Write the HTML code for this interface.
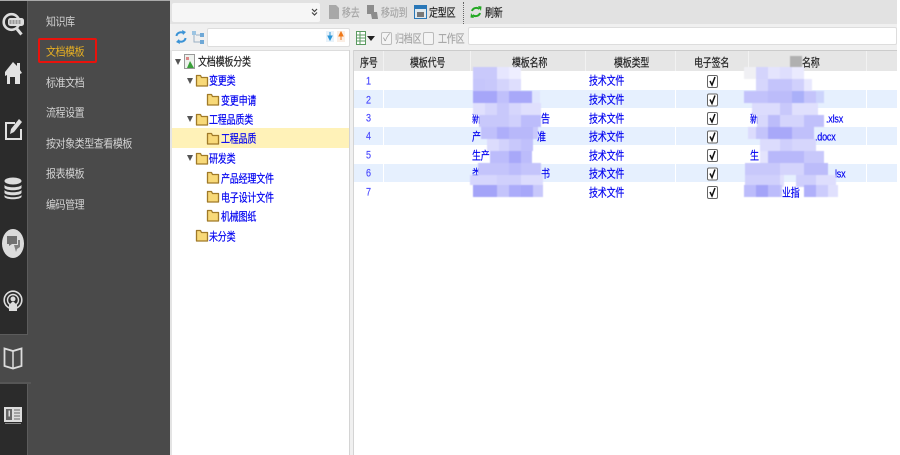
<!DOCTYPE html>
<html><head><meta charset="utf-8"><style>
html,body{margin:0;padding:0;background:#fff}
#p{position:relative;width:900px;height:455px;overflow:hidden;background:#fff;font-family:"Liberation Sans","WenQuanYi Zen Hei","Noto Sans CJK SC",sans-serif;font-size:9px;line-height:12px;filter:blur(.35px)}
.a{position:absolute}
.t{position:absolute;white-space:nowrap;letter-spacing:-.2px;transform-origin:left center;transform:translateY(.5px) scaleY(1.250);-webkit-text-stroke:.15px currentColor}
.m{color:#d4d4d4;font-size:10px;letter-spacing:-.45px;transform:translateY(1.500px) scaleY(1.120);-webkit-text-stroke:0}
.n{color:#0000f0}
.h{color:#222;top:56px;text-align:center}
.g{color:#a6a6a6}
svg{position:absolute;overflow:visible}
</style></head><body><div id="p">
<div class="a" style="left:0;top:0;width:170px;height:455px;background:#4a4a4a"></div>
<div class="a" style="left:0;top:0;width:170px;height:1px;background:#aaa"></div>
<div class="a" style="left:0;top:1px;width:27px;height:334px;background:#2b2b2b"></div>
<div class="a" style="left:0;top:384px;width:27px;height:71px;background:#2b2b2b"></div>
<div class="a" style="left:27px;top:1px;width:1px;height:334px;background:#5c5c5c"></div>
<div class="a" style="left:27px;top:384px;width:1px;height:71px;background:#5c5c5c"></div>
<div class="a" style="left:0;top:334px;width:28px;height:1px;background:#5c5c5c"></div>
<div class="a" style="left:0;top:382px;width:31px;height:2px;background:#565656"></div>

<svg style="left:0;top:0" width="28" height="455" viewBox="0 0 28 455">
<circle cx="11.500" cy="22" r="7.800" fill="none" stroke="#ddd" stroke-width="2.600"/><rect x="8" y="18" width="16" height="8" rx="2.500" fill="#ddd"/><path d="M9.500 21h12M9.500 23h12" stroke="#555" stroke-width="1" stroke-dasharray="2 1"/><path d="M17 29l4.500 5.500" stroke="#ddd" stroke-width="3"/>
<path d="M5 72L13 62l4 4v-3h3v7l2 3-2 1v10h-5v-7h-5v7H7V75l-2 1z" fill="#e2e2e2"/>
<path d="M15 123H6v16h15v-10" fill="none" stroke="#e0e0e0" stroke-width="2"/><path d="M10 134l1-5 8-10 3 3-8 10z" fill="#e0e0e0"/>
<ellipse cx="13" cy="181" rx="8.500" ry="3.500" fill="#ddd"/><path d="M4.500 185c2 3 15 3 17 0v3c-2 3-15 3-17 0zM4.500 190c2 3 15 3 17 0v3c-2 3-15 3-17 0zM4.500 195c2 3 15 3 17 0v2c-2 3-15 3-17 0z" fill="#ddd"/>
<ellipse cx="13" cy="243.500" rx="11" ry="14.500" fill="#dcdcdc"/><path d="M7 236h10v8h-5l-3 2v-2H7z" fill="#707070"/><path d="M14 245h4v-5h2v7l-3 2-1 3z" fill="#808080"/>
<circle cx="13" cy="300" r="8.800" fill="none" stroke="#ddd" stroke-width="1.600"/><circle cx="13" cy="300" r="5.500" fill="none" stroke="#ddd" stroke-width="1.400"/><circle cx="13" cy="299" r="2.500" fill="#ddd"/><path d="M9 311v-6l3-3h2l3 3v6z" fill="#ddd"/>
<path d="M4.500 348.500l8.500 2.500 8.500-2.500v17.500l-8.500 2.500-8.500-2.500z" fill="none" stroke="#ddd" stroke-width="1.800"/><path d="M13 351v18" stroke="#ddd" stroke-width="1.500"/>
<rect x="4" y="407" width="18" height="15" fill="#ddd"/><rect x="6" y="409" width="6" height="11" fill="#666"/><rect x="8.500" y="410.500" width="1.500" height="6" fill="#ddd"/><path d="M14 410h6M14 413h6M14 416h6M14 419h6" stroke="#666"/><path d="M5 423.500h16" stroke="#888"/>
</svg>

<div class="a" style="left:38px;top:38px;height:25px;border:2px solid #e8120c;border-radius:2px;box-sizing:border-box;width:59px"></div>
<div class="t m" style="left:46px;top:16px">知识库</div>
<div class="t m" style="left:46px;top:46px;color:#e8b022">文档模板</div>
<div class="t m" style="left:46px;top:77px">标准文档</div>
<div class="t m" style="left:46px;top:107px">流程设置</div>
<div class="t m" style="left:46px;top:138px">按对象类型查看模板</div>
<div class="t m" style="left:46px;top:168px">报表模板</div>
<div class="t m" style="left:46px;top:199px">编码管理</div>

<div class="a" style="left:170px;top:0;width:730px;height:51px;background:#f0f0f0"></div>
<div class="a" style="left:170px;top:0;width:727px;height:24px;background:#e2e2e2"></div>
<div class="a" style="left:172px;top:3px;width:148px;height:19px;background:#f6f6f6;border-radius:2px"></div>
<svg style="left:311px;top:8px" width="7" height="8"><path d="M1 1l2.500 2.500L6 1M1 4.500L3.500 7 6 4.500" fill="none" stroke="#444" stroke-width="1.200"/></svg>
<svg style="left:329px;top:5px" width="10" height="15"><path d="M0 0h7l3 3v11H0z" fill="#a8a8a8"/></svg>
<div class="t g" style="left:342px;top:6px">移去</div>
<svg style="left:366px;top:5px" width="14" height="15"><path d="M1 0h7v7h3l1 7H6l-1-5H1z" fill="#8c8c8c"/></svg>
<div class="t g" style="left:381px;top:6px">移动到</div>
<svg style="left:414px;top:5px" width="13" height="14"><rect x=".5" y=".5" width="12" height="13" fill="#dfe8ee" stroke="#2a78b8"/><rect x="1" y="1" width="11" height="3" fill="#2a78b8"/><rect x="3" y="7" width="7" height="5" fill="#777"/></svg>
<div class="t" style="left:429px;top:6px;color:#222">定型区</div>
<div class="a" style="left:463px;top:2px;height:22px;border-left:1px dotted #666"></div>
<svg style="left:470px;top:6px" width="12" height="12" viewBox="0 0 12 12"><path d="M2 5a4.500 4 0 0 1 7.500-2M10 7a4.500 4 0 0 1-7.500 2" fill="none" stroke="#22a822" stroke-width="2"/><path d="M8 0l3.500.5L11 5zM4 12L.5 11.500 1 7z" fill="#22a822"/></svg>
<div class="t" style="left:485px;top:6px;color:#222">刷新</div>

<svg style="left:175px;top:30px" width="12" height="14" viewBox="0 0 12 14"><path d="M1.500 6a4.500 4 0 0 1 7-3M10.500 8a4.500 4 0 0 1-7 3" fill="none" stroke="#3b93d6" stroke-width="2"/><path d="M7 0l4 2-3 3zM5 14l-4-2 3-3z" fill="#3b93d6"/></svg>
<svg style="left:192px;top:31px" width="12" height="13"><rect x="0" y="0" width="4" height="4" fill="#9cc4e2"/><rect x="8" y="2" width="4" height="4" fill="#6fa8d6"/><rect x="8" y="9" width="4" height="4" fill="#6fa8d6"/><path d="M2 4v7h6M4 4h4" stroke="#9ab0c5" fill="none"/></svg>
<div class="a" style="left:207px;top:28px;width:141px;height:17px;background:#fff;border:1px solid #ddd;border-radius:2px"></div>
<svg style="left:326px;top:31px" width="20" height="11"><rect width="8" height="11" fill="#e8f2fa"/><rect x="11" width="8" height="11" fill="#fbeee4"/><path d="M4 1v5M2 5h4L4 9z" stroke="#2a96d8" fill="#2a96d8"/><path d="M15 9V5M13 5h4L15 1z" stroke="#f07818" fill="#f07818"/></svg>

<svg style="left:356px;top:31px" width="10" height="14"><rect x=".5" y=".5" width="9" height="13" fill="#fff" stroke="#5a9a60"/><path d="M1 4h8M1 7h8M1 10h8M4 1v12" stroke="#5a9a60"/></svg>
<div class="a" style="left:367px;top:36px;border:4px solid transparent;border-top:5px solid #222;border-bottom:0"></div>
<div class="a" style="left:381px;top:32px;width:9px;height:11px;background:#f4f4f4;border:1px solid #bbb;border-radius:2px;color:#999;font-size:10px;line-height:11px;text-align:center">✓</div>
<div class="t g" style="left:395px;top:32px">归档区</div>
<div class="a" style="left:423px;top:32px;width:9px;height:11px;background:#f4f4f4;border:1px solid #bbb;border-radius:2px"></div>
<div class="t g" style="left:438px;top:32px">工作区</div>
<div class="a" style="left:468px;top:27px;width:429px;height:18px;background:#fff;border:1px solid #ddd;border-radius:2px;box-sizing:border-box"></div>

<div class="a" style="left:170px;top:50px;width:2px;height:405px;background:#e4e4e4"></div>
<div class="a" style="left:172px;top:50px;width:178px;height:1px;background:#ddd"></div>
<div class="a" style="left:349px;top:50px;width:5px;height:405px;background:#f0f0f0;border-left:1px solid #d4d4d4;border-right:1px solid #d4d4d4;box-sizing:border-box"></div>
<div class="a" style="left:172px;top:128px;width:177px;height:20px;background:#fff2b8"></div>

<svg style="left:172px;top:54px" width="60" height="190">
<path d="M3 5h6l-3 6zM15 24h6l-3 6zM15 62h6l-3 6zM15 101h6l-3 6z" fill="#555"/>
<rect x="12.500" y=".5" width="10" height="14" fill="#eef2ee" stroke="#999"/><path d="M15 14l3-7 4 7z" fill="#3aa03a"/><rect x="14" y="3" width="3" height="3" fill="#d88"/>
<g fill="#f8d978" stroke="#a07a28" stroke-width="1.300" stroke-linejoin="round">
<path d="M24.500 21.500h4l1 2h6v8.500h-11z"/>
<path d="M24.500 60.500h4l1 2h6v8.500h-11z"/>
<path d="M24.500 99.500h4l1 2h6v8.500h-11z"/>
<path d="M24.500 176.500h4l1 2h6v8.500h-11z"/>
<path d="M35.500 40.500h4l1 2h6v8.500h-11z"/>
<path d="M35.500 79.500h4l1 2h6v8.500h-11z"/>
<path d="M35.500 118.500h4l1 2h6v8.500h-11z"/>
<path d="M35.500 137.500h4l1 2h6v8.500h-11z"/>
<path d="M35.500 156.500h4l1 2h6v8.500h-11z"/>
</g>
</svg>
<div class="t" style="left:198px;top:55px;color:#222">文档模板分类</div>
<div class="t n" style="left:209px;top:74px">变更类</div>
<div class="t n" style="left:221px;top:94px">变更申请</div>
<div class="t n" style="left:209px;top:113px">工程品质类</div>
<div class="t n" style="left:221px;top:132px">工程品质</div>
<div class="t n" style="left:209px;top:152px">研发类</div>
<div class="t n" style="left:221px;top:172px">产品经理文件</div>
<div class="t n" style="left:221px;top:191px">电子设计文件</div>
<div class="t n" style="left:221px;top:210px">机械图纸</div>
<div class="t n" style="left:209px;top:230px">未分类</div>

<div class="a" style="left:354px;top:50px;width:543px;height:1px;background:#ccc"></div>
<div class="a" style="left:354px;top:51px;width:543px;height:20px;background:#e6e6e6"></div>
<div class="a" style="left:383px;top:51px;width:1px;height:20px;background:#f2f2f2"></div>
<div class="a" style="left:470px;top:51px;width:1px;height:20px;background:#f2f2f2"></div>
<div class="a" style="left:585px;top:51px;width:1px;height:20px;background:#f2f2f2"></div>
<div class="a" style="left:675px;top:51px;width:1px;height:20px;background:#f2f2f2"></div>
<div class="a" style="left:748px;top:51px;width:1px;height:20px;background:#f2f2f2"></div>
<div class="a" style="left:866px;top:51px;width:1px;height:20px;background:#f2f2f2"></div>
<div class="t h" style="left:360px">序号</div>
<div class="t h" style="left:410px">模板代号</div>
<div class="t h" style="left:512px">模板名称</div>
<div class="t h" style="left:614px">模板类型</div>
<div class="t h" style="left:694px">电子签名</div>
<div class="t h" style="left:802px">名称</div>

<div class="a" style="left:354px;top:90px;width:543px;height:18px;background:#e6f0fe"></div>
<div class="a" style="left:354px;top:127px;width:543px;height:18px;background:#e6f0fe"></div>
<div class="a" style="left:354px;top:164px;width:543px;height:18px;background:#e6f0fe"></div>
<div class="a" style="left:383px;top:71px;width:1px;height:126px;background:#fff"></div>
<div class="a" style="left:675px;top:71px;width:1px;height:126px;background:#fff"></div>
<div class="a" style="left:866px;top:71px;width:1px;height:126px;background:#fff"></div>

<div style="color:#4a4aff">
<div class="t" style="left:366px;top:74px">1</div><div class="t" style="left:366px;top:93px">2</div><div class="t" style="left:366px;top:111px">3</div><div class="t" style="left:366px;top:129px">4</div><div class="t" style="left:366px;top:148px">5</div><div class="t" style="left:366px;top:166px">6</div><div class="t" style="left:366px;top:185px">7</div>
</div>
<div class="t n" style="left:589px;top:74px">技术文件</div><div class="t n" style="left:589px;top:93px">技术文件</div><div class="t n" style="left:589px;top:112px">技术文件</div><div class="t n" style="left:589px;top:130px">技术文件</div><div class="t n" style="left:589px;top:149px">技术文件</div><div class="t n" style="left:589px;top:167px">技术文件</div><div class="t n" style="left:589px;top:186px">技术文件</div>

<div class="t n" style="left:472px;top:112px">新</div><div class="t n" style="left:541px;top:112px">告</div>
<div class="t n" style="left:472px;top:130px">产</div><div class="t n" style="left:537px;top:130px">准</div>
<div class="t n" style="left:472px;top:149px">生产</div>
<div class="t n" style="left:472px;top:167px">类</div><div class="t n" style="left:541px;top:167px">书</div>
<div class="t n" style="left:750px;top:112px">新</div><div class="t n" style="left:826px;top:112px">.xlsx</div>
<div class="t n" style="left:815px;top:130px">.docx</div>
<div class="t n" style="left:750px;top:149px">生</div>
<div class="t n" style="left:835px;top:167px">lsx</div>
<div class="t n" style="left:782px;top:186px">业指</div>

<svg style="left:707px;top:74.500px" width="11" height="126">
<g fill="#fff" stroke="#666"><rect x=".5" y=".5" width="10" height="12" rx="1.500"/><rect x=".5" y="19" width="10" height="12" rx="1.500"/><rect x=".5" y="37.500" width="10" height="12" rx="1.500"/><rect x=".5" y="56" width="10" height="12" rx="1.500"/><rect x=".5" y="74.500" width="10" height="12" rx="1.500"/><rect x=".5" y="93" width="10" height="12" rx="1.500"/><rect x=".5" y="111.500" width="10" height="12" rx="1.500"/></g>
<g fill="none" stroke="#111" stroke-width="1.500"><path d="M3 6l2 4 3-8"/><path d="M3 24.500l2 4 3-8"/><path d="M3 43l2 4 3-8"/><path d="M3 61.500l2 4 3-8"/><path d="M3 80l2 4 3-8"/><path d="M3 98.500l2 4 3-8"/><path d="M3 117l2 4 3-8"/></g>
</svg>

<svg style="left:0;top:0;filter:blur(.5px)" width="900" height="455">
<g>
<rect x="473" y="67" width="24" height="12" fill="#c9c9fb"/><rect x="497" y="67" width="12" height="12" fill="#e6e6fe"/><rect x="509" y="67" width="12" height="12" fill="#eeeeff"/>
<rect x="473" y="79" width="12" height="12" fill="#c6c6fb"/><rect x="485" y="79" width="12" height="12" fill="#c8c8fb"/><rect x="497" y="79" width="12" height="12" fill="#d4d4fc"/><rect x="509" y="79" width="12" height="12" fill="#dedefd"/>
<rect x="473" y="91" width="24" height="12" fill="#a6a6f9"/><rect x="497" y="91" width="12" height="12" fill="#c0c0fb"/><rect x="509" y="91" width="23" height="12" fill="#a8a8f9"/><rect x="532" y="91" width="8" height="12" fill="#e0e6fe"/>
<rect x="473" y="103" width="12" height="12" fill="#e0e0fd"/><rect x="485" y="103" width="12" height="12" fill="#d6d6fc"/><rect x="497" y="103" width="12" height="12" fill="#c8c8fb"/><rect x="509" y="103" width="12" height="12" fill="#d6d6fc"/><rect x="521" y="103" width="20" height="12" fill="#dfdffd"/>
<rect x="479" y="115" width="18" height="12" fill="#c8c8fb"/><rect x="497" y="115" width="12" height="12" fill="#c8c8fb"/><rect x="509" y="115" width="12" height="12" fill="#d0d0fc"/><rect x="521" y="115" width="20" height="12" fill="#bcbcfb"/>
<rect x="481" y="127" width="16" height="12" fill="#c0c0fb"/><rect x="497" y="127" width="12" height="12" fill="#aeaefa"/><rect x="509" y="127" width="24" height="12" fill="#b8b8fa"/><rect x="533" y="127" width="5" height="12" fill="#c8c8fb"/>
<rect x="487" y="139" width="12" height="12" fill="#dcdcfd"/><rect x="499" y="139" width="10" height="12" fill="#d2d2fc"/><rect x="509" y="139" width="12" height="12" fill="#c8c8fb"/><rect x="521" y="139" width="12" height="12" fill="#c0c0fb"/>
<rect x="490" y="151" width="19" height="12" fill="#bcbcfb"/><rect x="509" y="151" width="12" height="12" fill="#a8a8f9"/><rect x="521" y="151" width="11" height="12" fill="#bcbcfb"/>
<rect x="478" y="163" width="31" height="12" fill="#c4c4fb"/><rect x="509" y="163" width="12" height="12" fill="#bcbcfb"/><rect x="521" y="163" width="20" height="12" fill="#c4c4fb"/>
<rect x="470" y="175" width="27" height="10" fill="#d6d6fd"/><rect x="497" y="175" width="24" height="10" fill="#d0d0fc"/><rect x="521" y="175" width="22" height="10" fill="#dcdcfd"/>
<rect x="473" y="185" width="24" height="12" fill="#a4a4f8"/><rect x="497" y="185" width="12" height="12" fill="#c4c4fb"/><rect x="509" y="185" width="12" height="12" fill="#acacfa"/><rect x="521" y="185" width="12" height="12" fill="#a8a8f9"/><rect x="533" y="185" width="10" height="12" fill="#c8c8fb"/>
</g>
<g>
<rect x="790" y="56" width="12" height="11" fill="#b0b0b0"/>
<rect x="744" y="67" width="12" height="12" fill="#f0f0f4"/><rect x="756" y="67" width="12" height="12" fill="#d4d4fc"/><rect x="768" y="67" width="12" height="12" fill="#e4e4fd"/><rect x="780" y="67" width="12" height="12" fill="#dedefd"/><rect x="792" y="67" width="12" height="12" fill="#eaeafe"/>
<rect x="756" y="79" width="12" height="12" fill="#d6d6fc"/><rect x="768" y="79" width="24" height="12" fill="#c4c4fb"/><rect x="792" y="79" width="12" height="12" fill="#d0d0fc"/><rect x="804" y="79" width="8" height="12" fill="#e8e8fe"/>
<rect x="744" y="91" width="24" height="12" fill="#c2c2fb"/><rect x="768" y="91" width="24" height="12" fill="#bcbcfa"/><rect x="792" y="91" width="12" height="12" fill="#aab0f9"/><rect x="804" y="91" width="12" height="12" fill="#c4c4fb"/><rect x="816" y="91" width="8" height="12" fill="#ccd4fc"/>
<rect x="752" y="103" width="28" height="12" fill="#dcdcfd"/><rect x="780" y="103" width="12" height="12" fill="#c8c8fb"/><rect x="792" y="103" width="26" height="12" fill="#e0e0fd"/>
<rect x="757" y="115" width="11" height="12" fill="#d8d8fc"/><rect x="768" y="115" width="12" height="12" fill="#bcbcfa"/><rect x="780" y="115" width="12" height="12" fill="#d4d4fc"/><rect x="792" y="115" width="12" height="12" fill="#d4d4fc"/><rect x="804" y="115" width="20" height="12" fill="#c0c0fb"/>
<rect x="748" y="127" width="8" height="12" fill="#dcdcfd"/><rect x="756" y="127" width="12" height="12" fill="#c4c4fb"/><rect x="768" y="127" width="24" height="12" fill="#a8a8f9"/><rect x="792" y="127" width="22" height="12" fill="#c0c0fb"/>
<rect x="760" y="139" width="20" height="12" fill="#dcdcfd"/><rect x="780" y="139" width="12" height="12" fill="#cfcffc"/><rect x="792" y="139" width="24" height="12" fill="#d6d6fc"/>
<rect x="768" y="151" width="36" height="12" fill="#b8b8fa"/><rect x="804" y="151" width="20" height="12" fill="#c8c8fb"/><rect x="760" y="151" width="8" height="12" fill="#e4e4fd"/>
<rect x="745" y="163" width="35" height="12" fill="#c8c8fb"/><rect x="780" y="163" width="24" height="12" fill="#d4d4fc"/><rect x="804" y="163" width="24" height="12" fill="#bcbcfa"/>
<rect x="745" y="175" width="35" height="12" fill="#d0d0fc"/><rect x="780" y="175" width="4" height="12" fill="#e0e0fd"/><rect x="796" y="175" width="20" height="12" fill="#cfcffc"/><rect x="816" y="175" width="20" height="12" fill="#dedefd"/>
<rect x="744" y="185" width="12" height="12" fill="#bcbcfb"/><rect x="756" y="185" width="12" height="12" fill="#a4a4f8"/><rect x="768" y="185" width="12" height="12" fill="#bcbcfb"/><rect x="780" y="185" width="2" height="12" fill="#c8c8fb"/><rect x="804" y="185" width="12" height="12" fill="#b0b0fa"/><rect x="816" y="185" width="12" height="12" fill="#ccccfc"/><rect x="828" y="185" width="10" height="12" fill="#e0e0fd"/>
</g>
</svg>
<div class="a" style="left:897px;top:0;width:3px;height:455px;background:#fff"></div>
</div></body></html>
